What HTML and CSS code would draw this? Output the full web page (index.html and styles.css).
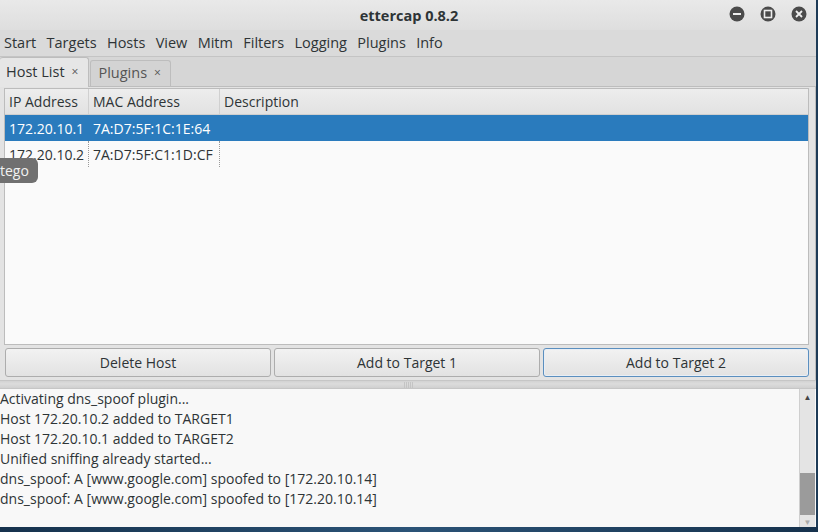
FILE: index.html
```html
<!DOCTYPE html>
<html>
<head>
<meta charset="utf-8">
<link rel="stylesheet" href="styles.css">
</head>
<body>
<div class="window">
  <div class="titlebar">
    <div class="title">ettercap 0.8.2</div>
    <div class="wbtns">
      <span class="wbtn"><svg width="16" height="16" viewBox="0 0 16 16"><circle cx="8" cy="8" r="7.5" fill="#4b4b4b"/><rect x="4" y="7" width="8" height="2" fill="#eee"/></svg></span>
      <span class="wbtn"><svg width="16" height="16" viewBox="0 0 16 16"><circle cx="8" cy="8" r="7.5" fill="#4b4b4b"/><rect x="4.5" y="4.5" width="7" height="7" fill="none" stroke="#eee" stroke-width="1.6"/></svg></span>
      <span class="wbtn"><svg width="16" height="16" viewBox="0 0 16 16"><circle cx="8" cy="8" r="7.5" fill="#4b4b4b"/><path d="M5 5L11 11M11 5L5 11" stroke="#eee" stroke-width="1.8"/></svg></span>
    </div>
  </div>
  <div class="menubar">
    <span class="mi">Start</span><span class="mi">Targets</span><span class="mi">Hosts</span><span class="mi">View</span><span class="mi">Mitm</span><span class="mi">Filters</span><span class="mi">Logging</span><span class="mi">Plugins</span><span class="mi">Info</span>
  </div>
  <div class="tabbar">
    <div class="tab active">Host List <span class="x">×</span></div>
    <div class="tab">Plugins <span class="x">×</span></div>
  </div>
  <div class="page">
    <div class="tableframe">
      <div class="thead">
        <div class="c c1">IP Address</div>
        <div class="c c2">MAC Address</div>
        <div class="c c3">Description</div>
      </div>
      <div class="row sel">
        <div class="c c1">172.20.10.1</div>
        <div class="c c2">7A:D7:5F:1C:1E:64</div>
        <div class="c c3"></div>
      </div>
      <div class="row dotted">
        <div class="c c1">172.20.10.2</div>
        <div class="c c2">7A:D7:5F:C1:1D:CF</div>
        <div class="c c3"></div>
      </div>
    </div>
    <div class="btnrow">
      <div class="btn">Delete Host</div>
      <div class="btn">Add to Target 1</div>
      <div class="btn focus">Add to Target 2</div>
    </div>
  </div>
  <div class="handle"><span class="grip"></span></div>
  <div class="logarea">
    <div class="log">
      <div>Activating dns_spoof plugin...</div>
      <div>Host 172.20.10.2 added to TARGET1</div>
      <div>Host 172.20.10.1 added to TARGET2</div>
      <div>Unified sniffing already started...</div>
      <div>dns_spoof: A [www.google.com] spoofed to [172.20.10.14]</div>
      <div>dns_spoof: A [www.google.com] spoofed to [172.20.10.14]</div>
    </div>
    <div class="vscroll">
      <div class="arrow up">▲</div>
      <div class="track"><div class="thumb"></div></div>
      <div class="arrow down">▼</div>
    </div>
  </div>
</div>
<div class="desktop"></div>
<div class="tooltip">tego</div>
</body>
</html>
```
FILE: styles.css
```css
html, body {
  margin: 0;
  padding: 0;
  width: 818px;
  height: 532px;
  overflow: hidden;
  font-family: "Open Sans", "Noto Sans", sans-serif;
  font-size: 14px;
  color: #2e3436;
  background: #1d3b57;
}
.window {
  display: flex;
  flex-direction: column;
  height: 527px;
  background: #dadada;
  margin-right: 2px;
}
.titlebar {
  height: 30px;
  flex: none;
  display: flex;
  align-items: center;
  justify-content: center;
  position: relative;
  background: linear-gradient(#e9e9e9, #dedede);
}
.title {
  font-weight: bold;
  font-size: 14.5px;
  color: #2e3436;
  padding-left: 2px;
}
.wbtns {
  position: absolute;
  right: 9px;
  top: 6px;
  display: flex;
  gap: 15px;
}
.wbtn { display: block; width: 16px; height: 16px; }
.wbtn svg { display: block; }
.menubar {
  height: 27px;
  box-sizing: border-box;
  padding-bottom: 2px;
  flex: none;
  display: flex;
  align-items: center;
  padding-left: 4px;
  gap: 10.3px;
  font-size: 14.5px;
  background: #dadada;
  border-bottom: 1px solid #c4c4c4;
}
.mi { color: #2e3436; }
.tabbar {
  height: 29px;
  flex: none;
  display: flex;
  align-items: flex-end;
  background: #d6d6d6;
  border-bottom: 1px solid #bdbdbd;
}
.tab {
  height: 26px;
  box-sizing: border-box;
  display: flex;
  align-items: center;
  padding: 0 9px 2px 7px;
  border: 1px solid #bdbdbd;
  border-bottom: none;
  border-radius: 3px 3px 0 0;
  background: #d3d3d3;
  color: #555;
  margin-right: 1px;
  font-size: 14.5px;
}
.tab.active {
  height: 30px;
  background: #e6e6e6;
  color: #2e3436;
  border-left: none;
  padding-left: 6px;
  padding-right: 10px;
  margin-bottom: -1px;
  padding-bottom: 2px;
}
.tab .x { font-size: 12px; margin-left: 7px; color: #555; }
.page {
  flex: none;
  height: 292px;
  display: flex;
  flex-direction: column;
  background: #e3e3e3;
  padding: 1px 6px 0 4px;
  border-right: 1px solid #bdbdbd;
}
.tableframe {
  flex: 1;
  background: #fafafa;
  border: 1px solid #bcbcbc;
}
.thead, .row { display: flex; }
.thead {
  height: 25px;
  background: linear-gradient(#ededed, #e2e2e2);
  border-bottom: 1px solid #cfcfcf;
}
.c {
  box-sizing: border-box;
  padding-left: 4px;
  display: flex;
  align-items: center;
  white-space: nowrap;
}
.c1 { width: 84px; }
.c2 { width: 131px; }
.c3 { flex: 1; }
.thead .c { border-right: 1px solid #d0d0d0; color: #2e3436; }
.thead .c3 { border-right: none; }
.row { height: 26px; }
.row.sel { background: #2a7bbd; color: #fff; }
.row.sel .c { color: #fff; }
.row.dotted .c1, .row.dotted .c2 { border-right: 1px dotted #9a9a9a; }
.btnrow {
  height: 35px;
  flex: none;
  display: flex;
  gap: 3px;
  padding: 3px 0 3px 1px;
  box-sizing: border-box;
}
.btn {
  flex: 1;
  display: flex;
  align-items: center;
  justify-content: center;
  border: 1px solid #adadad;
  border-radius: 3px;
  background: linear-gradient(#f2f2f2, #e2e2e2);
  color: #2e3436;
}
.btn.focus { border-color: #5b8fbf; box-shadow: inset 0 0 0 1px #e8eef5; }
.handle {
  height: 7px;
  flex: none;
  background: linear-gradient(#d2d2d2, #dcdcdc 40%, #d0d0d0);
  border-top: 1px solid #c6c6c6;
  border-bottom: 1px solid #c6c6c6;
  display: flex;
  justify-content: center;
  align-items: center;
}
.grip {
  width: 9px;
  height: 6px;
  background: repeating-linear-gradient(90deg, #c4c4c4 0 1px, transparent 1px 2px);
}
.logarea {
  flex: 1;
  display: flex;
  background: #f8f8f8;
}
.log {
  flex: 1;
  padding-top: 0;
  line-height: 20px;
  color: #2e3436;
  white-space: nowrap;
}
.vscroll {
  width: 15px;
  flex: none;
  margin-right: 1px;
  display: flex;
  flex-direction: column;
  background: #e4e4e4;
  border-left: 1px solid #cfcfcf;
}
.arrow {
  height: 14px;
  font-size: 8px;
  display: flex;
  align-items: center;
  justify-content: center;
  color: #444;
}
.arrow.down { color: #aaa; height: 12px; }
.track {
  flex: 1;
  display: flex;
  flex-direction: column;
  justify-content: flex-end;
}
.thumb {
  height: 42px;
  background: #9b9b9b;
}
.desktop {
  height: 5px;
  background: linear-gradient(90deg, #16324d, #2b5377 50%, #16324d);
}
.tooltip {
  position: absolute;
  left: -12px;
  top: 158px;
  width: 38px;
  height: 25px;
  padding-left: 12px;
  border-radius: 6px;
  background: #707070;
  color: #f2f2f2;
  display: flex;
  align-items: center;
  font-size: 14px;
}
```
